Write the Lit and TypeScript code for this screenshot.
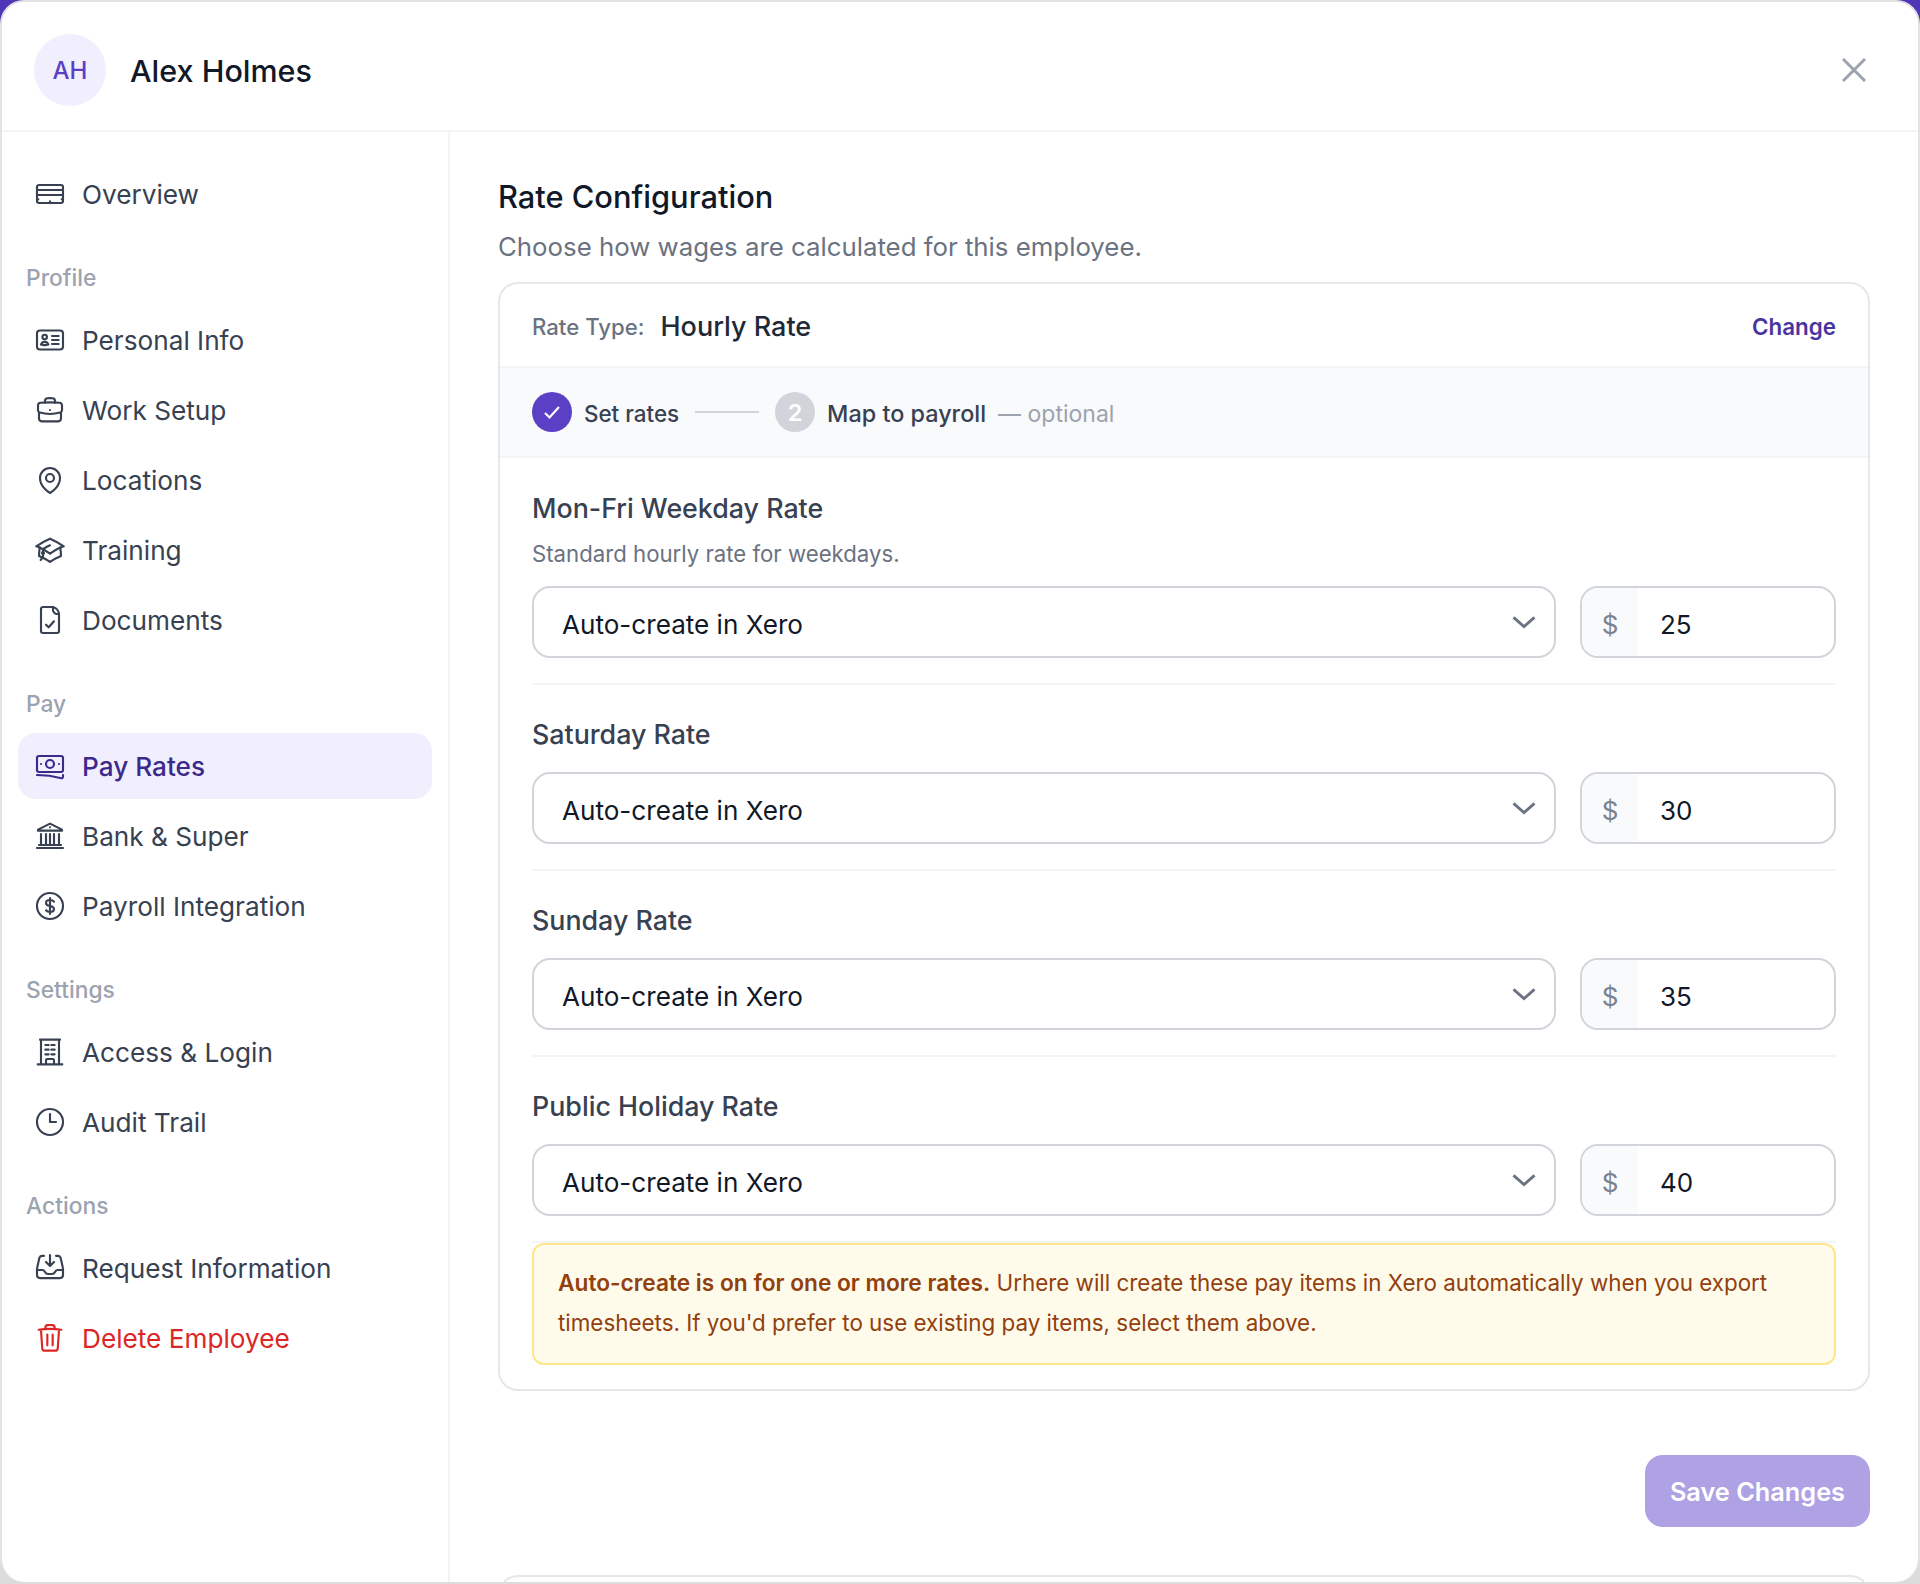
import { LitElement, html, css, svg } from "lit";
import { customElement } from "lit/decorators.js";

const icons: Record<string, unknown> = {
  overview: svg`<path d="M2.25 6.75A1.5 1.5 0 0 1 3.75 5.25h16.5a1.5 1.5 0 0 1 1.5 1.5v10.5a1.5 1.5 0 0 1-1.5 1.5H3.75a1.5 1.5 0 0 1-1.5-1.5V6.75Z"/><path d="M2.25 9h19.500M2.25 12.750h19.500M2.25 16h1M20.750 16h1M12 17.500v1"/>`,
  id: svg`<rect x="2.25" y="4.900" width="19.500" height="14.200" rx="2.200"/><circle cx="8" cy="9.800" r="1.700"/><path d="M5.200 15.400c.5-1.300 1.600-2 2.800-2s2.300.7 2.800 2c-1.700.5-3.900.5-5.600 0ZM13.500 9h5M13.500 12h5M13.500 15h5"/>`,
  briefcase: svg`<path d="M20.250 14.150v4.250a2.200 2.200 0 0 1-2 2.100H5.750a2.200 2.200 0 0 1-2-2.100v-4.250"/><path d="M3 8.700c0-1.100.8-2 1.800-2.100C8.800 6.200 15.200 6.200 19.200 6.600c1 .1 1.800 1 1.800 2.100v3.500c0 .8-.5 1.500-1.300 1.700-5 1.400-10.400 1.400-15.400 0C3.500 13.700 3 13 3 12.200V8.700Z"/><path d="M8.250 6.500V5.250c0-1.100.8-2 1.900-2.100 1.200-.1 2.500-.1 3.700 0 1.100.1 1.900 1 1.900 2.100V6.500M12 12h.01"/>`,
  pin: svg`<circle cx="12" cy="10.500" r="3"/><path d="M19.500 10.500c0 7.140-7.500 11.250-7.500 11.250S4.500 17.640 4.500 10.500a7.500 7.500 0 1 1 15 0Z"/>`,
  cap: svg`<path d="M4.260 10.150a60 60 0 0 0-.49 6.350A48.600 48.600 0 0 1 12 20.900a48.600 48.600 0 0 1 8.230-4.400 61 61 0 0 0-.49-6.350"/><path d="M4.260 10.150A50.600 50.600 0 0 0 1.650 9.200 60.700 60.700 0 0 1 12 3.500a60.700 60.700 0 0 1 10.350 5.700c-.9.300-1.760.6-2.610.950A48.700 48.700 0 0 0 12 14.700a48.700 48.700 0 0 0-7.740-4.550Z"/><path d="M6.750 15a.75.750 0 1 0 0-1.500.75.750 0 0 0 0 1.500ZM6.750 15v-3.700A48 48 0 0 1 12 8.500M4.990 19.500A7.500 7.500 0 0 0 6.750 16.600V15"/>`,
  doc: svg`<path d="M14.250 2.250H6.750A1.500 1.500 0 0 0 5.250 3.750v16.500a1.500 1.500 0 0 0 1.500 1.500h10.500a1.500 1.500 0 0 0 1.500-1.500V8.250A6 6 0 0 0 14.250 2.250Z"/><path d="M14.250 2.250v2.250c0 1.500 1.500 3 3 3h1.500M9 15.500l2 2 4-4.500"/>`,
  money: svg`<rect x="2.250" y="4.500" width="19.500" height="12" rx="1.500"/><circle cx="12" cy="10.500" r="3"/><path d="M5.250 10.500h.01M18.750 10.500h.01M2.250 18.750c6.300 0 12.400.8 18.300 2.400.6.100 1.200-.3 1.200-1v-1.400"/>`,
  bank: svg`<path d="M12 2.750 3 7.250v.75h18v-.75l-9-4.500ZM11.990 5.500h.02M2.250 21h19.500M3.750 18.750h16.500M5.250 10.500v8.250M9 10.500v8.250M12 10.500v8.250M15 10.500v8.250M18.750 10.500v8.250"/>`,
  dollar: svg`<circle cx="12" cy="12" r="9.750"/><path d="M12 6v12M15 8.800c-.7-.9-1.800-1.300-3-1.300-1.700 0-3 .9-3 2.200 0 1.400 1.300 2 3 2.300 1.700.3 3 .9 3 2.300 0 1.300-1.300 2.200-3 2.200-1.200 0-2.300-.4-3-1.300"/>`,
  building: svg`<path d="M2.750 21.250h18.500M4.500 2.750h15M5.250 2.750v18.500M18.750 2.750v18.500M8.500 6.750h2.500M13 6.750h2.500M8.500 10.250h2.500M13 10.250h2.500M8.500 13.750h2.500M13 13.750h2.500M9 21.250v-3a1 1 0 0 1 1-1h4a1 1 0 0 1 1 1v3"/>`,
  clock: svg`<circle cx="12" cy="12" r="9.750"/><path d="M12 6v6h4.500"/>`,
  inbox: svg`<path d="M7.500 2.900h-1.400a2.250 2.250 0 0 0-2 1.300L2.400 11.600c-.1.300-.15.500-.15.800v4.900a2.250 2.250 0 0 0 2.250 2.250h15a2.250 2.250 0 0 0 2.250-2.250v-4.900c0-.3-.05-.5-.15-.8L19.900 4.200a2.250 2.250 0 0 0-2-1.300h-1.400"/><path d="M2.250 13.500h3.860a2.250 2.250 0 0 1 2.010 1.240l.26.520a2.250 2.250 0 0 0 2.010 1.240h3.220a2.250 2.250 0 0 0 2.010-1.240l.26-.520a2.250 2.250 0 0 1 2.010-1.240h3.860M12 2.250v8.250M9 7.500l3 3 3-3"/>`,
  trash: svg`<path d="M3.500 5.800c5.500-.8 11.500-.8 17 0M5.200 5.600l1 14.300a1.800 1.800 0 0 0 1.800 1.600h8a1.800 1.800 0 0 0 1.800-1.600l1-14.300M8.500 5.300V4.200c0-1 .7-1.800 1.700-1.900a24 24 0 0 1 3.600 0c1 .1 1.700.9 1.700 1.900v1.100M10 9.500v8M14 9.500v8"/>`,
};

type Item = { label: string; icon: string; cls?: string };
type Group = { title?: string; items: Item[] };

const groups: Group[] = [
  { items: [{ label: "Overview", icon: "overview" }] },
  {
    title: "Profile",
    items: [
      { label: "Personal Info", icon: "id" },
      { label: "Work Setup", icon: "briefcase" },
      { label: "Locations", icon: "pin" },
      { label: "Training", icon: "cap" },
      { label: "Documents", icon: "doc" },
    ],
  },
  {
    title: "Pay",
    items: [
      { label: "Pay Rates", icon: "money", cls: "active" },
      { label: "Bank & Super", icon: "bank" },
      { label: "Payroll Integration", icon: "dollar" },
    ],
  },
  {
    title: "Settings",
    items: [
      { label: "Access & Login", icon: "building" },
      { label: "Audit Trail", icon: "clock" },
    ],
  },
  {
    title: "Actions",
    items: [
      { label: "Request Information", icon: "inbox" },
      { label: "Delete Employee", icon: "trash", cls: "danger" },
    ],
  },
];

const rates = [
  { name: "Mon-Fri Weekday Rate", hint: "Standard hourly rate for weekdays.", value: "25" },
  { name: "Saturday Rate", value: "30" },
  { name: "Sunday Rate", value: "35" },
  { name: "Public Holiday Rate", value: "40" },
];

@customElement("app-root")
export class AppRoot extends LitElement {
  static styles = css`
    :host {
      display: block;
      height: 1584px;
      overflow: hidden;
      font-family: Inter, "Liberation Sans", sans-serif;
      background: linear-gradient(180deg, #4f35b8 0, #4f35b8 60px, #dcdcdc 61px);
    }
    .modal {
      box-sizing: border-box;
      height: 1582px;
      border-top: 2px solid #e3e3e3;
      border-left: 2px solid #e3e3e3;
      border-right: 2px solid #e3e3e3;
      border-radius: 24px;
      background: #fff;
      display: flex;
      flex-direction: column;
      overflow: hidden;
    }
    header {
      flex: none;
      box-sizing: border-box;
      height: 130px;
      border-bottom: 2px solid #f3f4f6;
      display: flex;
      align-items: center;
      padding: 32px 52px 24px 32px;
      gap: 24px;
    }
    .avatar {
      width: 72px;
      height: 72px;
      border-radius: 50%;
      background: #f1effd;
      color: #5b3fc4;
      display: flex;
      align-items: center;
      justify-content: center;
      font-size: 24px;
      font-weight: 500;
    }
    .name {
      flex: 1;
      font-size: 30.5px;
      font-weight: 500;
      color: #111827;
    }
    .close {
      width: 24px;
      height: 24px;
      stroke: #9ca3af;
      fill: none;
      stroke-width: 3;
    }
    .body {
      flex: 1;
      min-height: 0;
      display: flex;
    }
    nav {
      flex: none;
      box-sizing: border-box;
      width: 448px;
      border-right: 2px solid #f3f4f6;
      padding: 29px 16px 0 16px;
    }
    .group {
      margin-bottom: 34px;
    }
    .group h4 {
      margin: 0 0 14px 0;
      padding-left: 8px;
      height: 32px;
      line-height: 34px;
      font-size: 22.8px;
      font-weight: 500;
      color: #9ca3af;
    }
    .item {
      height: 66px;
      margin-bottom: 4px;
      border-radius: 18px;
      display: flex;
      align-items: center;
      padding-left: 16px;
      gap: 16px;
      color: #374151;
      font-size: 26.2px;
    }
    .item svg {
      width: 32px;
      height: 32px;
      fill: none;
      stroke: currentColor;
      stroke-width: 1.6;
      stroke-linecap: round;
      stroke-linejoin: round;
      flex: none;
    }
    .item.active {
      background: #f1effd;
      color: #3b2a8c;
      font-weight: 500;
    }
    .item.danger {
      color: #dc2626;
    }
    main {
      flex: 1;
      min-width: 0;
      padding: 45px 48px 0 48px;
    }
    h2 {
      margin: 0;
      font-size: 30.8px;
      line-height: 40px;
      font-weight: 500;
      color: #111827;
    }
    .sub {
      margin: 10px 0 15px 0;
      font-size: 25.8px;
      line-height: 40px;
      color: #6b7280;
    }
    .card {
      border: 2px solid #e5e7eb;
      border-radius: 20px;
      overflow: hidden;
    }
    .type {
      height: 82px;
      display: flex;
      align-items: center;
      padding: 2px 32px 0 32px;
      box-sizing: border-box;
    }
    .type .lbl {
      font-size: 22.2px;
      font-weight: 500;
      color: #6b7280;
      margin-right: 16px;
    }
    .type .val {
      flex: 1;
      font-size: 27px;
      font-weight: 500;
      color: #1f2937;
    }
    .type a {
      font-size: 22.4px;
      font-weight: 600;
      color: #4a35a0;
    }
    .steps {
      height: 92px;
      box-sizing: border-box;
      background: #f9fafb;
      border-top: 2px solid #f3f4f6;
      border-bottom: 2px solid #f3f4f6;
      display: flex;
      align-items: center;
      padding: 0 32px;
      font-size: 23.4px;
      font-weight: 500;
      color: #374151;
    }
    .steps .txt {
      padding-top: 3px;
    }
    .steps .first {
      font-size: 22.4px;
    }
    .dot {
      width: 40px;
      height: 40px;
      border-radius: 50%;
      display: flex;
      align-items: center;
      justify-content: center;
      margin-right: 12px;
      color: #fff;
      font-weight: 600;
    }
    .dot.on {
      background: #5b3fc4;
    }
    .dot.off {
      background: #d1d5db;
    }
    .dot svg {
      width: 24px;
      height: 24px;
      fill: none;
      stroke: #fff;
      stroke-width: 2.2;
    }
    .bar {
      width: 64px;
      height: 2px;
      background: #d1d5db;
      margin: 0 16px;
    }
    .opt {
      margin-left: 12px;
      font-weight: 400;
      color: #9ca3af;
      font-size: 23px;
    }
    .rows {
      padding: 0 32px 24px 32px;
    }
    .rate {
      border-bottom: 2px solid #f3f4f6;
      padding: 31px 0 25px 0;
    }
    .rate:first-child {
      padding-top: 32px;
    }
    .rate h3 {
      margin: 0;
      font-size: 26.8px;
      line-height: 36px;
      font-weight: 500;
      color: #374151;
    }
    .rate p {
      margin: 10px 0 0 0;
      font-size: 22.2px;
      line-height: 36px;
      color: #6b7280;
    }
    .fields {
      display: flex;
      gap: 24px;
      margin-top: 20px;
    }
    .rate p + .fields {
      margin-top: 14px;
    }
    .select {
      flex: 1;
      height: 72px;
      box-sizing: border-box;
      border: 2px solid #d1d5db;
      border-radius: 18px;
      display: flex;
      align-items: center;
      justify-content: space-between;
      padding: 0 16px 0 28px;
      font-size: 26.1px;
      color: #111827;
    }
    .select span {
      padding-top: 4px;
    }
    .select svg {
      width: 28px;
      height: 28px;
      fill: none;
      stroke: #6b7280;
      stroke-width: 2.4;
    }
    .money {
      width: 256px;
      height: 72px;
      box-sizing: border-box;
      border: 2px solid #d1d5db;
      border-radius: 18px;
      display: flex;
      overflow: hidden;
      font-size: 26px;
    }
    .money span {
      width: 56px;
      padding-top: 4px;
      box-sizing: border-box;
      background: #f9fafb;
      color: #7b8290;
      display: flex;
      align-items: center;
      justify-content: center;
    }
    .money b {
      font-weight: 400;
      color: #111827;
      display: flex;
      align-items: center;
      padding: 4px 0 0 22px;
    }
    .warn {
      box-sizing: border-box;
      height: 122px;
      border: 2px solid #fde68a;
      border-radius: 12px;
      background: #fffbeb;
      padding: 18px 24px;
      font-size: 22.4px;
      line-height: 40px;
      color: #92400e;
    }
    .warn strong {
      font-size: 22.7px;
      font-weight: 600;
    }
    .actions {
      display: flex;
      justify-content: flex-end;
      margin-top: 64px;
    }
    button {
      height: 72px;
      padding: 0 25px;
      border: 0;
      border-radius: 18px;
      background: #afa2e4;
      color: #fff;
      font: 600 25.3px Inter, sans-serif;
    }
    .next {
      margin-top: 48px;
      height: 40px;
      border: 2px solid #e5e7eb;
      border-radius: 20px;
    }
  `;

  private navItem(it: Item) {
    return html`<div class="item ${it.cls ?? ""}">
      <svg viewBox="0 0 24 24">${icons[it.icon]}</svg>
      <span>${it.label}</span>
    </div>`;
  }

  render() {
    return html`<div class="modal">
      <header>
        <div class="avatar">AH</div>
        <div class="name">Alex Holmes</div>
        <svg class="close" viewBox="0 0 24 24"><path d="M1 1l22 22M23 1L1 23" /></svg>
      </header>
      <div class="body">
        <nav>
          ${groups.map(
            (g) => html`<div class="group">
              ${g.title ? html`<h4>${g.title}</h4>` : ""} ${g.items.map((i) => this.navItem(i))}
            </div>`
          )}
        </nav>
        <main>
          <h2>Rate Configuration</h2>
          <p class="sub">Choose how wages are calculated for this employee.</p>
          <section class="card">
            <div class="type">
              <span class="lbl">Rate Type:</span>
              <span class="val">Hourly Rate</span>
              <a>Change</a>
            </div>
            <div class="steps">
              <span class="dot on"><svg viewBox="0 0 24 24"><path d="M5 13l4.500 4.500L19 7" /></svg></span>
              <span class="txt first">Set rates</span>
              <span class="bar"></span>
              <span class="dot off">2</span>
              <span class="txt">Map to payroll</span>
              <span class="txt opt">— optional</span>
            </div>
            <div class="rows">
              ${rates.map(
                (r) => html`<div class="rate">
                  <h3>${r.name}</h3>
                  ${r.hint ? html`<p>${r.hint}</p>` : ""}
                  <div class="fields">
                    <div class="select">
                      <span>Auto-create in Xero</span>
                      <svg viewBox="0 0 24 24"><path d="M3 8l9 8 9-8" /></svg>
                    </div>
                    <div class="money"><span>$</span><b>${r.value}</b></div>
                  </div>
                </div>`
              )}
              <div class="warn">
                <strong>Auto-create is on for one or more rates.</strong> Urhere will create these pay items in
                Xero automatically when you export timesheets. If you'd prefer to use existing pay items, select
                them above.
              </div>
            </div>
          </section>
          <div class="actions"><button>Save Changes</button></div>
          <div class="next"></div>
        </main>
      </div>
    </div>`;
  }
}
